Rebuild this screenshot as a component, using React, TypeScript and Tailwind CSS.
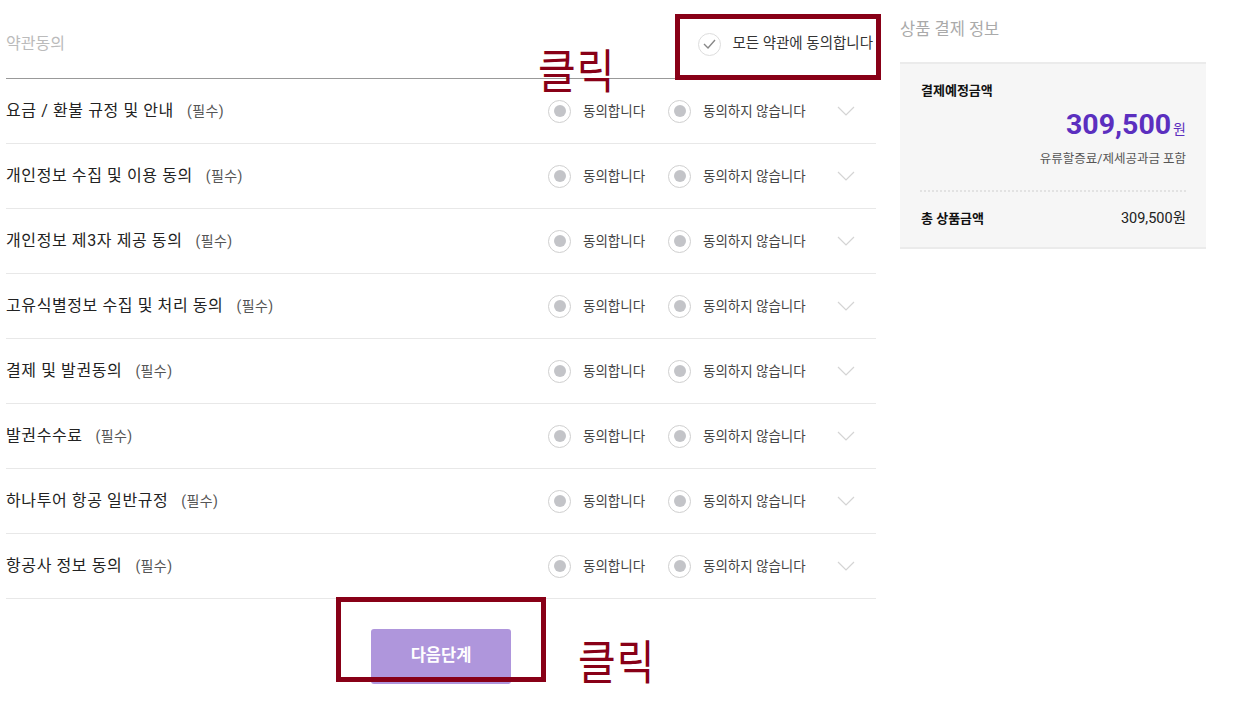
import React, { useState } from 'react';

const TERMS = [
  '요금 / 환불 규정 및 안내',
  '개인정보 수집 및 이용 동의',
  '개인정보 제3자 제공 동의',
  '고유식별정보 수집 및 처리 동의',
  '결제 및 발권동의',
  '발권수수료',
  '하나투어 항공 일반규정',
  '항공사 정보 동의',
];

const FONT = "font-['Roboto','Noto_Sans_CJK_KR',sans-serif]";

function Radio({ label }: { label: string }) {
  return (
    <label className="flex items-center gap-[12px] cursor-pointer">
      <span className="w-[23px] h-[23px] rounded-full border border-[#cfcfcf] bg-white flex items-center justify-center">
        <span className="w-[12px] h-[12px] rounded-full bg-[#c3c4c8]" />
      </span>
      <span className="text-[13.5px] text-[#444]">{label}</span>
    </label>
  );
}

function Chevron() {
  return (
    <svg width="18" height="10" viewBox="0 0 18 10" fill="none">
      <path d="M1 1l8 8 8-8" stroke="#d4d4d4" strokeWidth="1.2" />
    </svg>
  );
}

function TermRow({ title }: { title: string }) {
  return (
    <div className="h-[65px] flex items-center border-b border-[#e8e8e8]">
      <span className="text-[16px] tracking-[0.6px] text-[#222]">{title}</span>
      <span className="ml-[13px] text-[14px] tracking-[0.4px] text-[#555]">(필수)</span>
      <div className="ml-auto flex items-center pr-[21px]">
        <div className="w-[120px]">
          <Radio label="동의합니다" />
        </div>
        <div className="w-[169px]">
          <Radio label="동의하지 않습니다" />
        </div>
        <Chevron />
      </div>
    </div>
  );
}

export default function App() {
  const [allAgree, setAllAgree] = useState(false);

  return (
    <div className={`relative w-[1255px] h-[708px] bg-white ${FONT}`}>
      <div className="flex">
        {/* 약관 동의 */}
        <div className="ml-[6px] w-[870px]">
          <div className="h-[79px] flex items-center border-b border-[#999] pt-[10px]">
            <span className="text-[16px] text-[#bbb]">약관동의</span>
            <button
              onClick={() => setAllAgree(!allAgree)}
              className="ml-auto flex items-center gap-[11px] pr-[3px]"
            >
              <span className="w-[23px] h-[23px] rounded-full border border-[#ddd] flex items-center justify-center">
                <svg width="13" height="10" viewBox="0 0 13 10" fill="none">
                  <path d="M1 5l4 4 7-8" stroke={allAgree ? '#7b4fd0' : '#888'} strokeWidth="1.4" />
                </svg>
              </span>
              <span className="text-[14.5px] text-[#333]">모든 약관에 동의합니다</span>
            </button>
          </div>

          {TERMS.map((t) => (
            <TermRow key={t} title={t} />
          ))}

          <div className="flex justify-center pt-[30px]">
            <button className="w-[140px] h-[55px] rounded-[3px] bg-[#af96dc] text-white text-[16.5px] font-bold">
              다음단계
            </button>
          </div>
        </div>

        {/* 상품 결제 정보 */}
        <div className="ml-[24px] w-[306px]">
          <div className="pt-[18px] h-[62px] text-[16.5px] text-[#aaa]">상품 결제 정보</div>
          <div className="bg-[#f6f6f6] border-t-2 border-b-2 border-[#ebebeb] px-[20px] pt-[17px] pb-[17px]">
            <div className="pl-px text-[13px] font-bold text-[#111]">결제예정금액</div>
            <div className="mt-[10px] text-right leading-none">
              <span className="text-[28.5px] font-bold text-[#5b2fbf]">309,500</span>
              <span className="ml-[2px] text-[14px] text-[#5b2fbf]">원</span>
            </div>
            <div className="mt-[11px] text-right text-[12.5px] text-[#555]">유류할증료/제세공과금 포함</div>
            <div className="mt-[21px] border-t-2 border-dotted border-[#e2e2e2]" />
            <div className="mt-[16px] flex items-center justify-between">
              <span className="pl-px text-[13px] font-bold text-[#111]">총 상품금액</span>
              <span className="text-[14.5px] text-[#222]">309,500원</span>
            </div>
          </div>
        </div>
      </div>

      {/* 안내 표시 */}
      <div className="absolute left-[675px] top-[14px] w-[206px] h-[66px] border-[5px] border-[#880017] pointer-events-none" />
      <div className="absolute left-[538px] top-[35px] text-[41px] leading-[64px] tracking-[1px] text-[#880017] scale-y-115 origin-top pointer-events-none">
        클릭
      </div>
      <div className="absolute left-[336px] top-[597px] w-[210px] h-[85px] border-[5px] border-[#880017] pointer-events-none" />
      <div className="absolute left-[578px] top-[626px] text-[41px] leading-[64px] tracking-[1px] text-[#880017] scale-y-115 origin-top pointer-events-none">
        클릭
      </div>
    </div>
  );
}
